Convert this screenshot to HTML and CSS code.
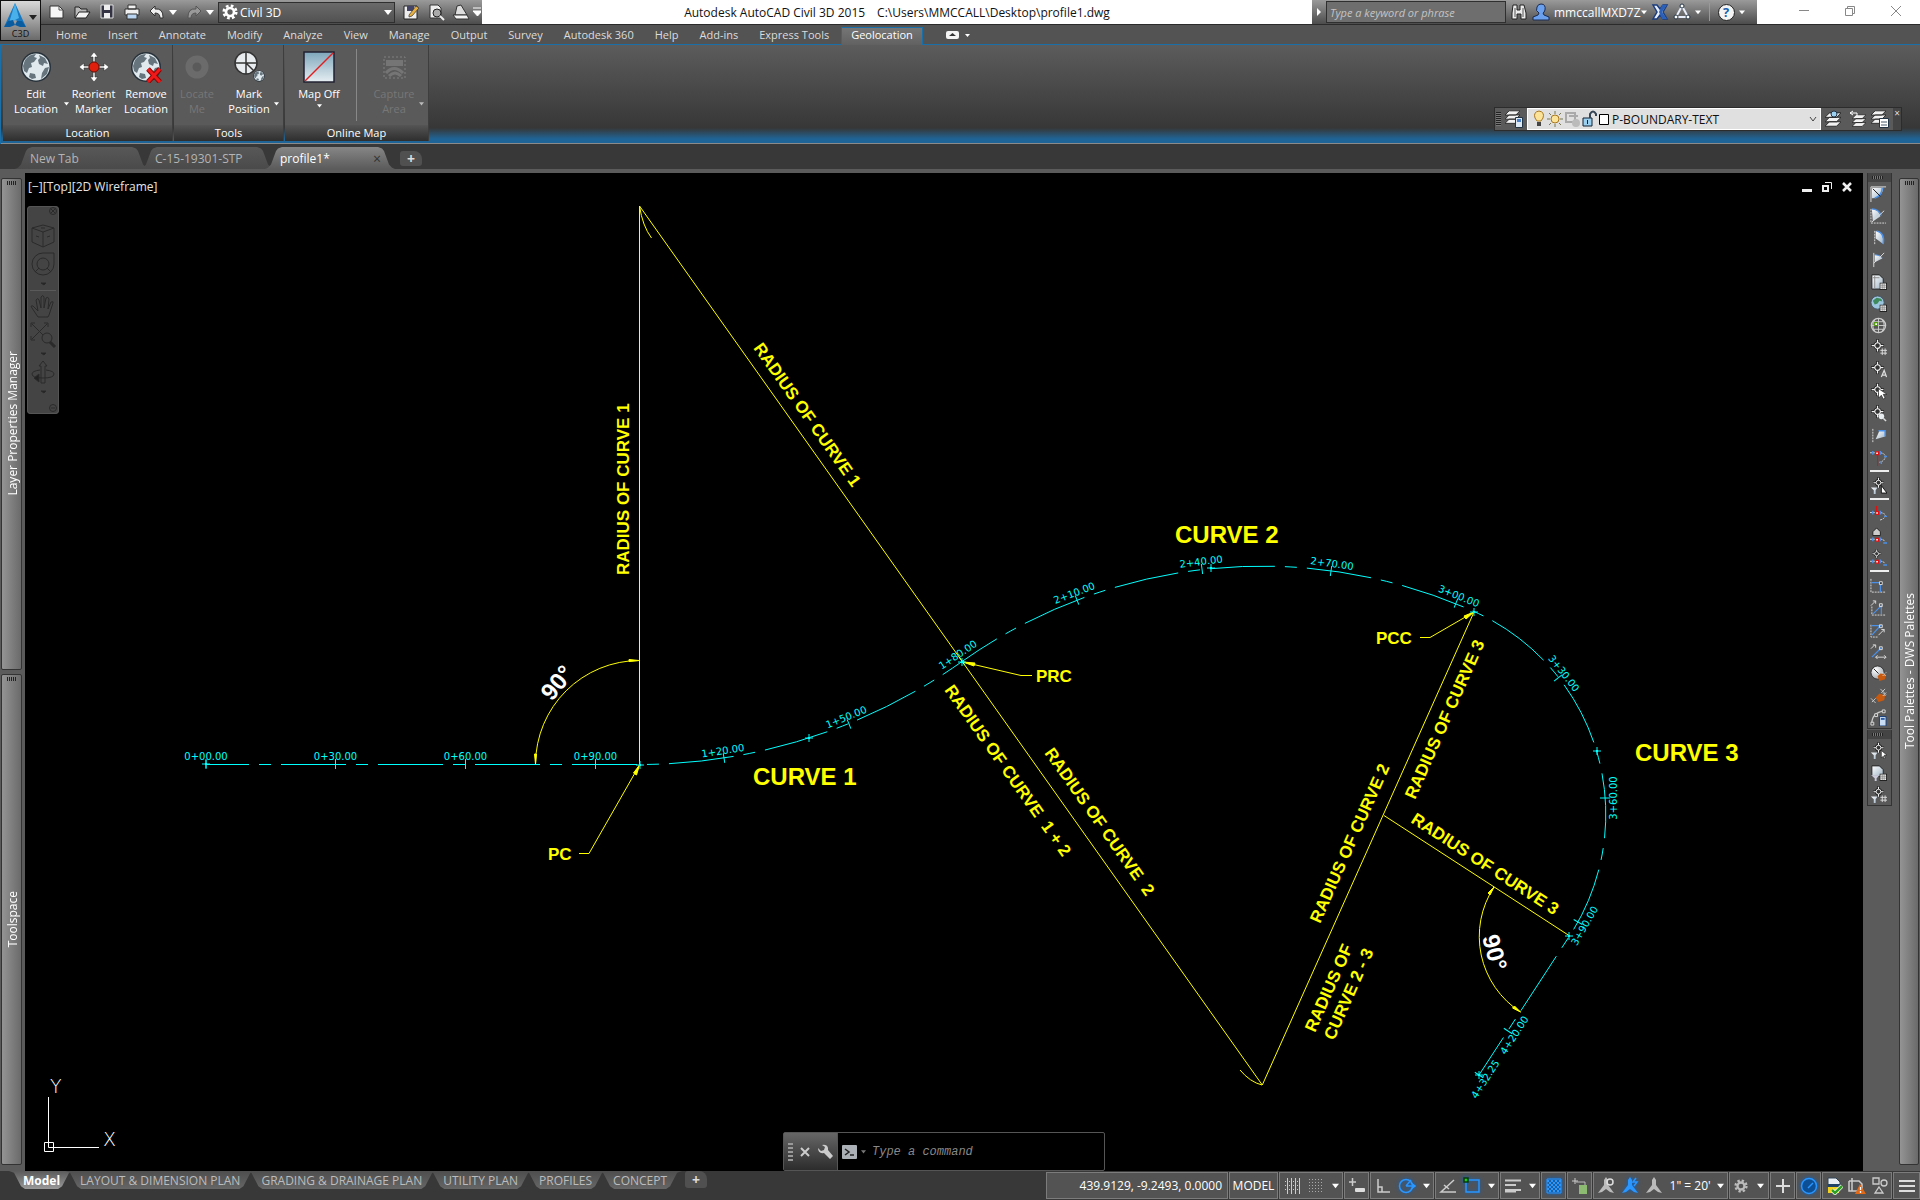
FILE: index.html
```html
<!DOCTYPE html>
<html lang="en">
<head>
<meta charset="utf-8">
<title>Autodesk AutoCAD Civil 3D 2015</title>
<link rel="stylesheet" href="styles.css">
</head>
<body>
<svg class="sprite" aria-hidden="true">
  <defs>
    <linearGradient id="ice" x1="0" y1="0" x2="1" y2="1"><stop offset="0" stop-color="#fff"/><stop offset="1" stop-color="#9fb4c6"/></linearGradient>
    <linearGradient id="sky" x1="0" y1="0" x2="0" y2="1"><stop offset="0" stop-color="#7ea6bb"/><stop offset="1" stop-color="#e6eef2"/></linearGradient>
    <radialGradient id="ball" cx=".35" cy=".3" r=".8"><stop offset="0" stop-color="#fff"/><stop offset="1" stop-color="#9aa2a8"/></radialGradient>
  </defs>
  <symbol id="caret" viewBox="0 0 8 8"><path d="M0 2h8L4 7z" fill="currentColor"/></symbol>
  <symbol id="globe" viewBox="0 0 32 32"><circle cx="16" cy="16" r="15" fill="#26313a"/><circle cx="16" cy="16" r="13.5" fill="#dfe9ee"/><path d="M5 9q4-6 11-6l-2 3 3 1-3 4-3 1 1 4-3 1-2 5-3-2-1-5zM19 4l6 3 3 6-4-1-1 3-4-2-1-4 2-2zM25 17l4-1-2 7-6 5 1-6zM10 22l5 1 1 4-4 1-3-2z" fill="#66747e"/></symbol>
  <symbol id="target" viewBox="0 0 18 18"><path d="M9 0v6M9 12v6M0 9h6M12 9h6" stroke="#222" stroke-width="3.5"/><circle cx="9" cy="9" r="4" fill="none" stroke="#222" stroke-width="3.5"/><path d="M9 1v5M9 12v5M1 9h5M12 9h5" stroke="#f2f2f2" stroke-width="1.6"/><circle cx="9" cy="9" r="3.8" fill="#333" stroke="#f2f2f2" stroke-width="1.5"/></symbol>
  <symbol id="t1" viewBox="0 0 18 18"><path d="M2 3h12a12 11 0 0 1-12 11z" fill="url(#ice)"/><path d="M13 3q0 8-8 11" stroke="#4a90e8" stroke-width="1.6" fill="none"/><path d="M1 18V2h16" stroke="#ddd" fill="none"/><path d="M3 4l8 8" stroke="#111"/></symbol>
  <symbol id="t2" viewBox="0 0 18 18"><path d="M2 2q8 1 9 8L3 15z" fill="url(#ice)"/><path d="M2 2q7 0 10 7" stroke="#4a90e8" fill="none" stroke-width="1.5"/><path d="M2 16L15 4" stroke="#ddd"/><path d="M1 2v15h16" stroke="#ddd" stroke-dasharray="2 1" fill="none"/></symbol>
  <symbol id="t3" viewBox="0 0 18 18"><path d="M6 2q9 1 8 14L6 10z" fill="url(#ice)"/><path d="M7 2q9 2 7 14" stroke="#4a90e8" fill="none" stroke-width="1.5"/><path d="M5 2v14" stroke="#ddd" stroke-dasharray="2 1"/></symbol>
  <symbol id="t4" viewBox="0 0 18 18"><path d="M5 4q6 0 8 4l-8 4z" fill="url(#ice)"/><path d="M5 4q5 0 8 3" stroke="#4a90e8" fill="none"/><path d="M4 2v15M4 13l11-11" stroke="#ddd"/></symbol>
  <symbol id="mini" viewBox="0 0 8 8"><path d="M0 0h8v8H0z" fill="#222"/><path d="M1 1h6v6H1z" fill="#f2f2f2"/><path d="M3 1v6M5 1v6M1 3h6M1 5h6" stroke="#666" stroke-width=".6"/></symbol>
  <symbol id="t5" viewBox="0 0 18 18"><path d="M2 2h8l4 4v11H2z" fill="url(#ice)" stroke="#222"/><path d="M5 3v13M3 5h7" stroke="#888"/><use href="#mini" x="10" y="10" width="8" height="8"/></symbol>
  <symbol id="t6" viewBox="0 0 18 18"><circle cx="8" cy="8" r="7" fill="#9cc6e0" stroke="#456" /><path d="M3 6l4-3 5 1 1 3-3-1-2 3-3 1z" fill="#3f8a5c"/><use href="#mini" x="10" y="10" width="8" height="8"/></symbol>
  <symbol id="t7" viewBox="0 0 18 18"><circle cx="9" cy="9" r="7.5" fill="#555" stroke="#ccc" stroke-width="1.4"/><path d="M9 1v16M1 9h16M3 5h12M3 13h12M5 3q-4 6 0 12M13 3q4 6 0 12" stroke="#ccc" fill="none"/><path d="M5 6h3v3H5z" fill="#fff" stroke="#4da000" stroke-width="1.2"/></symbol>
  <symbol id="t8" viewBox="0 0 18 18"><use href="#target" width="14" height="14" x="1"/><path d="M13 10v7M16 10v7M11 12h7M11 15h7" stroke="#ddd"/></symbol>
  <symbol id="t9" viewBox="0 0 18 18"><use href="#target" width="14" height="14" x="1"/><path d="M12 17l3-7 2.500 7M13 15h4" stroke="#ddd" fill="none" stroke-width="1.300"/></symbol>
  <symbol id="t10" viewBox="0 0 18 18"><use href="#target" width="14" height="14" x="1"/><path d="M9 6v10l3-3 2 4 2-1-2-4h4z" fill="#fff" stroke="#222" stroke-width=".7"/></symbol>
  <symbol id="t11" viewBox="0 0 18 18"><use href="#target" width="14" height="14" x="1"/><circle cx="12" cy="12" r="3" fill="#e8eef0"/><path d="M14 14l3 3" stroke="#ddd" stroke-width="1.500"/></symbol>
  <symbol id="t12" viewBox="0 0 18 18"><path d="M6 13L10 4h6v6z" fill="url(#ice)"/><path d="M9 4h7v6" stroke="#4a90e8" fill="none" stroke-width="1.500"/><path d="M3 2v14" stroke="#ddd" stroke-dasharray="2 1"/></symbol>
  <symbol id="t13" viewBox="0 0 18 18"><path d="M0 4h6M11 4q6 1 5 5t-6 5" stroke="#ddd" stroke-dasharray="2 1" fill="none"/><path d="M3 2v4M11 2v4M15 8h3M12 13v3" stroke="#4a90e8" stroke-width="1.500"/><path d="M8 5v13" stroke="#e01010" stroke-width="1.200"/><path d="M6 3h3v3H6z" fill="#fff" stroke="#e01010" stroke-width="1.300"/></symbol>
  <symbol id="t14" viewBox="0 0 18 18"><use href="#target" width="12" height="12" x="3"/><path d="M1 11h7l-2 3v4H4v-4z" fill="url(#ice)"/><path d="M12 9v8h6z" fill="#fff" stroke="#111"/></symbol>
  <symbol id="t15" viewBox="0 0 18 18"><path d="M0 8h5M11 8q6 1 5 4t-6 4" stroke="#ddd" stroke-dasharray="2 1" fill="none"/><path d="M3 6v4M11 6v4M15 12h3" stroke="#4a90e8" stroke-width="1.500"/><path d="M7 1v6" stroke="#e01010" stroke-width="1.500"/><path d="M6 7h3v3H6z" fill="#fff" stroke="#e01010" stroke-width="1.300"/></symbol>
  <symbol id="t16" viewBox="0 0 18 18"><path d="M3 9V5l4-4 4 4v4z" fill="#ccc" stroke="#222"/><path d="M0 13h5M11 13q4 0 5 3" stroke="#ddd" stroke-dasharray="2 1" fill="none"/><path d="M3 11v4M11 11v4M14 17h4" stroke="#4a90e8" stroke-width="1.500"/><path d="M6 12h3v3H6z" fill="#fff" stroke="#e01010" stroke-width="1.300"/></symbol>
  <symbol id="t17" viewBox="0 0 18 18"><use href="#target" width="10" height="10" x="2"/><path d="M0 13h5M11 13q4 0 5 3" stroke="#ddd" stroke-dasharray="2 1" fill="none"/><path d="M3 11v4M11 11v4M14 17h4" stroke="#4a90e8" stroke-width="1.500"/><path d="M6 12h3v3H6z" fill="#fff" stroke="#e01010" stroke-width="1.300"/></symbol>
  <symbol id="t18" viewBox="0 0 18 18"><path d="M1 2v14h16" stroke="#ddd" stroke-dasharray="2 1" fill="none"/><path d="M1 6h10v10" stroke="#4a90e8" fill="none" stroke-width="1.300"/><path d="M10 5h3v3h-3z" fill="#333" stroke="#ddd"/></symbol>
  <symbol id="t19" viewBox="0 0 18 18"><path d="M2 8v9h15" stroke="#ddd" stroke-dasharray="2 1" fill="none"/><path d="M3 16L12 7v9" stroke="#4a90e8" fill="none" stroke-width="1.300"/><path d="M10 5h3v3h-3zM1 7l5-5M3 2h3v3" fill="none" stroke="#ddd"/></symbol>
  <symbol id="t20" viewBox="0 0 18 18"><path d="M1 4v13h8" stroke="#ddd" stroke-dasharray="2 1" fill="none"/><path d="M1 5h10L2 15" stroke="#4a90e8" fill="none" stroke-width="1.300"/><path d="M10 4h3v3h-3zM9 15l6-6M12 9h3v3" fill="none" stroke="#ddd"/></symbol>
  <symbol id="t21" viewBox="0 0 18 18"><path d="M2 15L12 5" stroke="#4a90e8" stroke-width="1.300"/><path d="M10 4h3v3h-3zM1 6l4-4M3 2h3v3M6 15h11M8 13l-2 2 2 2M15 13l2 2-2 2" fill="none" stroke="#ddd"/></symbol>
  <symbol id="t22" viewBox="0 0 18 18"><circle cx="8" cy="8" r="7" fill="url(#ball)" stroke="#333"/><path d="M4 4l5 5" stroke="#222"/><path d="M8 12l3-3 6 1-1 5-6 2z" fill="#c85a10"/><path d="M13 8l4 4M17 8l-4 4" stroke="#fff" stroke-dasharray="1 1"/></symbol>
  <symbol id="t23" viewBox="0 0 18 18"><path d="M1 12l5 5M2 16l4-4M11 2l6 6M16 2l-4 4" stroke="#ccc" fill="none"/><path d="M6 11l4-4 6 2-1 5-6 2z" fill="#c85a10"/><path d="M13 6l4 4M17 6l-4 4" stroke="#fff" stroke-dasharray="1 1"/></symbol>
  <symbol id="t24" viewBox="0 0 18 18"><path d="M2 15Q2 4 15 2" stroke="#ccc" fill="none" stroke-width="1.300"/><path d="M1 14h3v3H1zM5 5h3v3H5zM13 1h3v3h-3z" fill="#555" stroke="#ddd"/><path d="M10 8h7v10h-7z" fill="#c8dcf4" stroke="#123a78"/><path d="M11.500 9.500h4v2h-4z" fill="#2d5da8"/></symbol>
  <symbol id="t25" viewBox="0 0 18 18"><use href="#target" width="12" height="12" x="3"/><path d="M1 11h7l-2 3v4H4v-4z" fill="url(#ice)"/><path d="M12 9v8l2-2 1 3 1-1-1-3h3z" fill="#fff" stroke="#111" stroke-width=".6"/></symbol>
  <symbol id="t26" viewBox="0 0 18 18"><path d="M2 2h8l4 4v7H2z" fill="url(#ice)" stroke="#222"/><path d="M1 12h9l-3 3v3H5v-3z" fill="#ccd"/><use href="#mini" x="10" y="10" width="8" height="8"/></symbol>
  <symbol id="t27" viewBox="0 0 18 18"><use href="#target" width="12" height="12" x="3"/><path d="M1 11h7l-2 3v4H4v-4z" fill="url(#ice)"/><path d="M13 10v7M16 10v7M11 12h7M11 15h7" stroke="#ddd"/></symbol>
  <symbol id="layers" viewBox="0 0 18 18"><path d="M5 11h13l-5 5H0zM5 6h13l-5 5H0zM5 1h13l-5 5H0z" fill="#f2f2f2" stroke="#222"/></symbol>
  <symbol id="node" viewBox="-5 -5 10 10"><path d="M-4 0h8M0-4V4M-1 0l1-1 1 1-1 1z" stroke="#0ff" fill="#0ff"/></symbol>
  <symbol id="person" viewBox="0 0 18 18"><path d="M9 1q5 0 4 6-1 3-2 3l1 2 5 2v3H1v-3l5-2 1-2Q3 8 5 4q1-3 4-3z" fill="#6aa0ee" stroke="#1a2a50"/></symbol>
  <symbol id="gear" viewBox="0 0 18 18"><circle cx="9" cy="9" r="4.500" fill="none" stroke="currentColor" stroke-width="3"/><circle cx="9" cy="9" r="7" fill="none" stroke="currentColor" stroke-width="3" stroke-dasharray="3 2.500"/></symbol>
  <symbol id="compass" viewBox="0 0 18 18"><path d="M9 0l2 3v5l6 8-4-1-4-3-4 3-4 1 6-8V3z" fill="currentColor"/></symbol>
</svg>

<header class="app-head">
  <div class="titlebar">
    <div class="quick">
      <button class="app-menu" aria-label="Application menu"><svg width="36" height="27" viewBox="0 0 36 27"><path d="M12 1l11 24-6-5-5-2-5 2-6 5z" fill="#1878c0"/><path d="M12 1l4 15-4 2-6 3z" fill="#4ab0ea"/><path d="M1 25l4-6 5-1 2 5-5 2zM23 25l-4-6-5 0-2 4 5 2z" fill="#0a5ca0"/><path d="M26 13h8l-4 5z" fill="#222"/></svg><span>C3D</span></button>
      <button aria-label="New"><svg width="18" height="18"><path d="M2 3h9l4 4v8H2z" fill="#f6f6f6" stroke="#333"/><path d="M11 3v4h4" fill="none" stroke="#555"/></svg></button>
      <button aria-label="Open"><svg width="18" height="18"><path d="M2 15V4h4l2 2h6v3" fill="#bbb" stroke="#222"/><path d="M2 15l4-6h11l-4 6z" fill="#f4f4f4" stroke="#222"/></svg></button>
      <button aria-label="Save"><svg width="18" height="18"><path d="M3 2h12v13H3z" fill="#334" stroke="#ddd"/><path d="M6 2h6v5H6zM6 10h6v5H6z" fill="#eee"/></svg></button>
      <button aria-label="Plot"><svg width="18" height="18"><path d="M5 2h8v4H5zM2 6h14v6H2z" fill="#f0f0f0" stroke="#333"/><path d="M4 11h10v5H4z" fill="#b8d4f0" stroke="#333"/></svg></button>
      <button aria-label="Undo"><svg width="18" height="18"><path d="M2 8l5-5v3q8-1 8 8v1h-3q0-5-5-5v3z" fill="#f0f0f0" stroke="#333"/></svg></button>
      <svg class="car" width="8" height="8"><use href="#caret"/></svg>
      <button aria-label="Redo"><svg width="18" height="18"><path d="M16 8l-5-5v3Q3 5 3 14v1h3q0-5 5-5v3z" fill="#999" stroke="#555"/></svg></button>
      <svg class="car" width="8" height="8"><use href="#caret"/></svg>
      <label class="workspace"><svg width="16" height="16"><use href="#gear"/></svg><select aria-label="Workspace"><option>Civil 3D</option></select><svg class="ws-car" width="8" height="8"><use href="#caret"/></svg></label>
      <button aria-label="Save as"><svg width="18" height="18"><path d="M2 3h13v13H2z" fill="#eee" stroke="#222"/><path d="M5 3h7v5H5z" fill="#446"/><path d="M7 12l7-9 3 2-7 8-3 1z" fill="#e8b040" stroke="#333" stroke-width=".7"/></svg></button>
      <button aria-label="Preview"><svg width="18" height="18"><path d="M3 2h8l3 3v10H3z" fill="#eee" stroke="#333"/><circle cx="10" cy="10" r="4" fill="#aaa" stroke="#222"/><path d="M13 13l4 4" stroke="#eee" stroke-width="2"/></svg></button>
      <button aria-label="Publish"><svg width="18" height="18"><path d="M5 3l4-1 6 10H3z" fill="#ddd" stroke="#333"/><path d="M1 12h14l2 4H4z" fill="#f4f4f4" stroke="#333"/></svg></button>
      <svg class="car" width="9" height="10"><path d="M0 1h9M0 4h9l-4.500 5z" fill="#fff" stroke="#fff" stroke-width="1"/></svg>
    </div>
    <h1 class="title"><span>Autodesk AutoCAD Civil 3D 2015</span><span>C:\Users\MMCCALL\Desktop\profile1.dwg</span></h1>
    <div class="info">
      <svg class="expander" width="6" height="8"><path d="M1 0v8l4-4z" fill="#fff"/></svg>
      <input type="text" placeholder="Type a keyword or phrase" aria-label="Search">
      <button aria-label="Find"><svg width="18" height="18"><path d="M3 2h4v5h3V2h4l2 8v6h-5v-5H7v5H2v-6z" fill="#ececec" stroke="#222"/><path d="M5 5v9M13 5v9" stroke="#555"/></svg></button>
      <button aria-label="Account"><svg width="18" height="18"><use href="#person"/></svg></button>
      <button class="user">mmccallMXD7Z<svg width="6" height="6"><use href="#caret"/></svg></button>
      <button aria-label="Exchange"><svg width="18" height="18"><path d="M2 2h4l3 4 3-4h4l-4 7 4 7h-4l-3-4-3 4H2l4-7z" fill="#e8eefa" stroke="#1b3d80" stroke-width="1.500"/><path d="M11 2h5l-5 7 5 7h-5l-3-7z" fill="#2a60b8"/></svg></button>
      <button aria-label="Autodesk 360"><svg width="18" height="18"><path d="M9 3l6 11H3z" fill="none" stroke="#e8eefa" stroke-width="2"/><circle cx="9" cy="3" r="2" fill="#fff" stroke="#234"/><circle cx="3" cy="14" r="2" fill="#fff" stroke="#234"/><circle cx="15" cy="14" r="2" fill="#fff" stroke="#234"/></svg></button>
      <svg class="car" width="6" height="6"><use href="#caret"/></svg>
      <i class="vsep"></i>
      <button class="help" aria-label="Help">?</button>
      <svg class="car" width="6" height="6"><use href="#caret"/></svg>
    </div>
    <div class="winctl">
      <button aria-label="Minimize"><svg width="12" height="12"><path d="M1 5.500h10" stroke="#888"/></svg></button>
      <button aria-label="Restore"><svg width="12" height="12" fill="none" stroke="#888"><path d="M1.500 3.500h7v7h-7zM3.500 3V1.500h7v7H9"/></svg></button>
      <button aria-label="Close"><svg width="12" height="12" stroke="#888"><path d="M1 1l10 10M11 1L1 11"/></svg></button>
    </div>
  </div>

  <nav class="menu">
    <a href="#">Home</a><a href="#">Insert</a><a href="#">Annotate</a><a href="#">Modify</a><a href="#">Analyze</a><a href="#">View</a><a href="#">Manage</a><a href="#">Output</a><a href="#">Survey</a><a href="#">Autodesk 360</a><a href="#">Help</a><a href="#">Add-ins</a><a href="#">Express Tools</a><a href="#" class="on">Geolocation</a>
    <button aria-label="Minimize ribbon"><svg width="26" height="10"><rect x="1" y="1" width="13" height="8" rx="2" fill="#f4f4f4"/><path d="M4 6h7L7.500 3z" fill="#333"/><path d="M20 4h5l-2.500 3z" fill="#fff"/></svg></button>
  </nav>

  <div class="ribbon">
    <section class="panel p-loc">
      <div class="tools">
        <button class="tool w56"><svg width="32" height="32"><use href="#globe"/></svg><span>Edit<br>Location</span><svg class="drop" width="5" height="5"><use href="#caret"/></svg></button>
        <button class="tool w56"><svg width="32" height="32"><path d="M16 1l4 5h-3v5h-2V6h-3zM16 31l4-5h-3v-5h-2v5h-3zM1 16l5-4v3h5v2H6v3zM31 16l-5-4v3h-5v2h5v3z" fill="#fff" stroke="#333" stroke-width=".6"/><circle cx="16" cy="16" r="5" fill="#e0200c" stroke="#701008"/></svg><span>Reorient<br>Marker</span></button>
        <button class="tool w46"><svg width="32" height="32"><use href="#globe"/><path d="M18 18l12 13M30 18L18 31" stroke="#8a0808" stroke-width="5"/><path d="M18 18l12 13M30 18L18 31" stroke="#f01818" stroke-width="3"/></svg><span>Remove<br>Location</span></button>
      </div>
      <h2>Location</h2>
    </section>
    <section class="panel p-tools">
      <div class="tools">
        <button class="tool w46" disabled><svg width="32" height="32"><circle cx="16" cy="16" r="8" fill="none" stroke="#777" stroke-width="7"/></svg><span>Locate<br>Me</span></button>
        <button class="tool w50"><svg width="32" height="32"><circle cx="13" cy="12" r="11" fill="#e8ecee" stroke="#333" stroke-width="1.500"/><path d="M13 1v22M2 12h22M13 12l8 8" stroke="#333" stroke-width="1.500"/><svg x="20" y="19" width="12" height="12"><use href="#globe"/></svg></svg><span>Mark<br>Position</span><svg class="drop" width="5" height="5"><use href="#caret"/></svg></button>
      </div>
      <h2>Tools</h2>
    </section>
    <section class="panel p-map">
      <div class="tools">
        <button class="tool w68"><svg width="32" height="32"><path d="M1 1h30v30H1z" fill="url(#sky)" stroke="#223" stroke-width="1.500"/><path d="M2 30L30 2" stroke="#e02020" stroke-width="1.500"/></svg><span>Map Off</span><svg class="drop low" width="5" height="5"><use href="#caret"/></svg></button>
        <i class="tool-sep"></i>
        <button class="tool w68" disabled><svg width="32" height="32"><path d="M6 6h21v21H6z" fill="none" stroke="#999" stroke-dasharray="2 2"/><path d="M8 9h17v6H8z" fill="#888"/><path d="M8 22q8-9 17 0M11 25q6-6 12 0" stroke="#888" stroke-width="3" fill="none"/></svg><span>Capture<br>Area</span><svg class="drop" width="5" height="5"><use href="#caret"/></svg></button>
      </div>
      <h2>Online Map</h2>
    </section>
    <div class="layerbar">
      <i class="grip-v"></i>
      <button aria-label="Layer properties"><svg width="18" height="18"><svg width="15" height="15"><use href="#layers"/></svg><path d="M10.500 7.500h7v10h-7z" fill="#dce8f4" stroke="#234"/><path d="M12 9h4v3h-4z" fill="#4a80c8"/></svg></button>
      <label class="layersel">
        <svg width="80" height="18"><path d="M9 1q6 1 4 7l-2 3H7L5 8Q3 2 9 1z" fill="#fbe39a" stroke="#a87820"/><path d="M7 12h4v4H7z" fill="#444"/><circle cx="25" cy="9" r="4" fill="#fbe39a" stroke="#a87820"/><path d="M25 1v3M25 14v3M17 9h3M30 9h3M19 3l2 2M31 3l-2 2M19 15l2-2M31 15l-2-2" stroke="#775"/><path d="M36 3h9v9h-9zM39 6h9" fill="none" stroke="#aaa" stroke-width="2"/><circle cx="46" cy="13" r="4" fill="#bbb"/><path d="M53 8h9v8h-9z" fill="#9cd0f0" stroke="#123"/><path d="M60 8V4q3-5 6 0v2" fill="none" stroke="#345" stroke-width="2"/><path d="M57.500 10v4" stroke="#123"/><path d="M69.500 4.500h9v10h-9z" fill="#fff" stroke="#000"/></svg>
        <select aria-label="Layer"><option>P-BOUNDARY-TEXT</option></select>
        <svg class="ly-car" width="8" height="8"><path d="M1 2l3 4 3-4" fill="none" stroke="#444"/></svg>
      </label>
      <button aria-label="Make current"><svg width="18" height="18"><svg y="2" width="16" height="16"><use href="#layers"/></svg><circle cx="9" cy="4" r="3" fill="#9cd0f0" stroke="#234"/></svg></button>
      <button aria-label="Layer previous"><svg width="18" height="18"><svg x="4" y="4" width="14" height="14"><use href="#layers"/></svg><path d="M2 3h7v3M5 1L2 3l3 2" fill="none" stroke="#fff"/></svg></button>
      <button aria-label="Layer states"><svg width="18" height="18"><svg width="15" height="15"><use href="#layers"/></svg><path d="M8.500 8.500h9v9h-9z" fill="#fff" stroke="#234"/><path d="M10 12h6M10 15h6" stroke="#456"/></svg></button>
      <button class="tiny" aria-label="Close toolbar">×</button>
    </div>
  </div>

  <div class="filetabs">
    <button>New Tab</button><button>C-15-19301-STP</button><button class="on">profile1*<span>×</span></button><button class="plus" aria-label="New drawing">+</button>
  </div>
</header>

<main class="work">
  <aside class="dock-left">
    <button class="pal pal-a"><i class="grip-h"></i><span>Layer Properties Manager</span></button>
    <button class="pal pal-b"><i class="grip-h"></i><span>Toolspace</span></button>
  </aside>

  <div class="canvas">
    <svg class="drawing" viewBox="25 173 1838 998" preserveAspectRatio="xMidYMid meet" role="img" aria-label="Horizontal alignment with three curves">
      <path class="align" d="M206 764.500H639.500A558.500 558.500 0 0 0 962 661.500A519 519 0 0 1 1474 611.500A222 222 0 0 1 1569.500 936L1479 1075"/>
      <g class="sta">
        <g transform="translate(206 764)"><path d="M0-5V5"/><text y="-4">0+00.00</text></g>
        <g transform="translate(335.500 764)"><path d="M0-5V5"/><text y="-4">0+30.00</text></g>
        <g transform="translate(465.500 764)"><path d="M0-5V5"/><text y="-4">0+60.00</text></g>
        <g transform="translate(595.500 764)"><path d="M0-5V5"/><text y="-4">0+90.00</text></g>
        <g transform="translate(724 758) rotate(-9)"><path d="M0-5V5"/><text y="-4">1+20.00</text></g>
        <g transform="translate(849 724) rotate(-22)"><path d="M0-5V5"/><text y="-4">1+50.00</text></g>
        <g transform="translate(962 661) rotate(-34)"><path d="M0-5V5"/><text y="-4">1+80.00</text></g>
        <g transform="translate(1077 600) rotate(-21)"><path d="M0-5V5"/><text y="-4">2+10.00</text></g>
        <g transform="translate(1202 569) rotate(-7)"><path d="M0-5V5"/><text y="-4">2+40.00</text></g>
        <g transform="translate(1331 571) rotate(8)"><path d="M0-5V5"/><text y="-4">2+70.00</text></g>
        <g transform="translate(1456 603) rotate(22)"><path d="M0-5V5"/><text y="-4">3+00.00</text></g>
        <g transform="translate(1558 678) rotate(52)"><path d="M0-5V5"/><text y="-4">3+30.00</text></g>
        <g transform="translate(1605 798) rotate(-90)"><path d="M0-5V5"/><text y="12">3+60.00</text></g>
        <g transform="translate(1578 922) rotate(-60)"><path d="M0-5V5"/><text y="11">3+90.00</text></g>
        <g transform="translate(1508 1031) rotate(-57)"><path d="M0-5V5"/><text y="11">4+20.00</text></g>
        <g transform="translate(1479 1075) rotate(-57)"><path d="M0-5V5"/><text y="11">4+32.25</text></g>
      </g>
      <g class="dim">
        <path d="M639.500 765V206L1262.300 1085L1474 612M1384 815.500L1569 935.500"/>
        <path d="M639.500 206q3 20 12 32M1240 1070q10 12 22 15"/>
        <path d="M535.500 764A104 104 0 0 1 639.500 660.500M1494 887A90 90 0 0 0 1520.500 1012"/>
        <path d="M639.500 765L589 853.500H579M963 662L1021 675.500H1032M1474 612L1430 637.500H1420"/>
        <path class="fill" d="M535.500 764l-1-10h2zM639 660.500l-10-1v2zM1494 887l-6 6 2 2zM1520.500 1012l-8-4 2-2zM639.500 765l-6 8 3 2zM963 662l12 1-1 3zM1474 612l-10 4 2 3z"/>
      </g>
      <g class="nodes">
        <use href="#node" x="201" y="759" width="10" height="10"/><use href="#node" x="635" y="760" width="10" height="10"/><use href="#node" x="804" y="733" width="10" height="10"/><use href="#node" x="957" y="657" width="10" height="10"/><use href="#node" x="1206" y="563" width="10" height="10"/><use href="#node" x="1469" y="607" width="10" height="10"/><use href="#node" x="1592" y="746" width="10" height="10"/><use href="#node" x="1564" y="931" width="10" height="10"/><use href="#node" x="1474" y="1070" width="10" height="10"/>
      </g>
      <g class="note">
        <text transform="translate(629 575) rotate(-90)">RADIUS OF CURVE 1</text>
        <text transform="translate(753 348) rotate(54.700)">RADIUS OF CURVE 1</text>
        <text transform="translate(944 690) rotate(54.700)">RADIUS OF CURVE  1 + 2</text>
        <text transform="translate(1044 753) rotate(54.700)">RADIUS OF CURVE  2</text>
        <text transform="translate(1320 924) rotate(-66)">RADIUS OF CURVE 2</text>
        <text transform="translate(1415 800) rotate(-66)">RADIUS OF CURVE 3</text>
        <text transform="translate(1410 822) rotate(33)">RADIUS OF CURVE 3</text>
        <text transform="translate(1315 1033) rotate(-66)">RADIUS OF</text>
        <text transform="translate(1334 1041) rotate(-66)">CURVE 2 - 3</text>
        <text x="548" y="860">PC</text><text x="1036" y="682">PRC</text><text x="1376" y="644">PCC</text>
        <g class="big"><text x="753" y="785">CURVE 1</text><text x="1175" y="543">CURVE 2</text><text x="1635" y="761">CURVE 3</text></g>
        <g class="deg"><text transform="translate(552 702) rotate(-51)">90°</text><text transform="translate(1482 937) rotate(75)">90°</text></g>
      </g>
      <g class="ucs"><path d="M48.500 1097V1147.500H99M44.500 1142.500h9v9h-9z"/><text x="50" y="1093">Y</text><text x="103" y="1146">X</text></g>
    </svg>

    <div class="vp-label">[−][Top][2D Wireframe]</div>
    <div class="vp-ctl">
      <button aria-label="Minimize viewport"><svg width="12" height="12"><path d="M1 8h10v3H1z" fill="#eee"/></svg></button>
      <button aria-label="Restore viewport"><svg width="12" height="12" fill="none" stroke="#eee"><path d="M2 5h5v5H2z" stroke-width="2"/><path d="M4 1.500h6.500V8"/></svg></button>
      <button aria-label="Close viewport"><svg width="12" height="12"><path d="M2 2l8 8M10 2l-8 8" stroke="#eee" stroke-width="2.500"/></svg></button>
    </div>

    <div class="navbar">
      <svg width="32" height="208" viewBox="0 0 32 208" fill="none" stroke="#2a2a2a">
        <circle cx="26" cy="5" r="3.500"/><path d="M24 3l4 4M28 3l-4 4"/>
        <path d="M5 22l11-3 11 3v14l-11 5-11-5zM5 22l11 4 11-4M16 26v15"/><path d="M9 30l3 1M20 31l3-1M14 22h4"/>
        <path d="M16 47h11v11a11 11 0 1 1-11-11z"/><circle cx="16" cy="58" r="6"/><path d="M12 62l-4 4M20 62l4 4"/>
        <path d="M14 77h5l-2 2zM14 147h5l-2 2zM14 185h5l-2 2z" fill="#222"/><path d="M3 84.500h26" stroke="#5a5a5a"/>
        <path d="M11 111l-6-9q-2-3 1-2l5 5-2-11q2-3 3 0l2 8V91q2-3 3 0v11l2-10q2-2 3 1l-1 10 3-7q3-1 2 1l-4 12-1 2z"/>
        <path d="M5 118l15 15M20 118L5 133M4 121v-4h4M17 117h4v4M4 130v4h4"/><circle cx="20" cy="132" r="5" fill="#444"/><path d="M23 136l5 5" stroke-width="3"/>
        <path d="M16 155l4 5h-2v17h-4v-17h-2z"/><path d="M13 164q-8 1-8 4 0 4 11 4t11-4q0-3-8-4"/><path d="M12 168v8l-5-4z" fill="#222"/>
        <circle cx="26" cy="202" r="3.500"/><path d="M24 202h4"/>
      </svg>
    </div>

    <div class="command">
      <div class="cmd-grip"><i class="dots"></i><button aria-label="Close"><svg width="12" height="12"><path d="M2 2l8 8M10 2l-8 8" stroke="#ccc" stroke-width="2"/></svg></button><button aria-label="Customize"><svg width="16" height="16"><path d="M1 4l3 3 3-1 1-3-3-2q5-1 6 3v2l5 6-3 3-6-6Q1 10 1 4z" fill="#ccc"/></svg></button></div>
      <svg width="15" height="14"><rect width="15" height="14" rx="1" fill="#aab0b6"/><path d="M3 4l4 3-4 3M8 10h4" fill="none" stroke="#222" stroke-width="1.500"/></svg>
      <svg class="cmd-car" width="5" height="5"><use href="#caret"/></svg>
      <input type="text" placeholder="Type a command" aria-label="Command line">
    </div>
  </div>

  <aside class="dock-tools">
    <div class="toolbox">
      <i class="grip-h"></i>
      <button aria-label="Angle distance"><svg><use href="#t1"/></svg></button><button aria-label="Azimuth distance"><svg><use href="#t2"/></svg></button><button aria-label="Deflection"><svg><use href="#t3"/></svg></button><button aria-label="Bearing"><svg><use href="#t4"/></svg></button><button aria-label="Northing easting"><svg><use href="#t5"/></svg></button><button aria-label="Grid northing"><svg><use href="#t6"/></svg></button><button aria-label="Latitude longitude"><svg><use href="#t7"/></svg></button><button aria-label="Point number"><svg><use href="#t8"/></svg></button><button aria-label="Point name"><svg><use href="#t9"/></svg></button><button aria-label="Point object"><svg><use href="#t10"/></svg></button><button aria-label="Zoom point"><svg><use href="#t11"/></svg></button><button aria-label="Side shot"><svg><use href="#t12"/></svg></button><button aria-label="Station offset"><svg><use href="#t13"/></svg></button>
      <hr>
      <button aria-label="Filter point"><svg><use href="#t14"/></svg></button>
      <hr>
      <button aria-label="Profile station"><svg><use href="#t15"/></svg></button><button aria-label="Profile surface"><svg><use href="#t16"/></svg></button><button aria-label="Profile point"><svg><use href="#t17"/></svg></button>
      <hr>
      <button aria-label="Inquiry 1"><svg><use href="#t18"/></svg></button><button aria-label="Inquiry 2"><svg><use href="#t19"/></svg></button><button aria-label="Inquiry 3"><svg><use href="#t20"/></svg></button><button aria-label="Inquiry 4"><svg><use href="#t21"/></svg></button><button aria-label="Clear circle"><svg><use href="#t22"/></svg></button><button aria-label="Clear line"><svg><use href="#t23"/></svg></button><button aria-label="Curve calculator"><svg><use href="#t24"/></svg></button>
    </div>
    <div class="toolbox">
      <i class="grip-h"></i>
      <button aria-label="Select point"><svg><use href="#t25"/></svg></button><button aria-label="Filter sheet"><svg><use href="#t26"/></svg></button><button aria-label="Filter number"><svg><use href="#t27"/></svg></button>
    </div>
  </aside>
  <aside class="dock-right"><button class="pal pal-c"><i class="grip-h"></i><span>Tool Palettes - DWS Palettes</span></button></aside>
</main>

<footer class="foot">
  <div class="layouts">
    <button class="on">Model</button><button>LAYOUT &amp; DIMENSION PLAN</button><button>GRADING &amp; DRAINAGE PLAN</button><button>UTILITY PLAN</button><button>PROFILES</button><button>CONCEPT</button><button class="plus" aria-label="New layout">+</button>
  </div>
  <div class="status">
    <div class="cell coords">439.9129, -9.2493, 0.0000</div>
    <div class="cell"><button class="model">MODEL</button></div>
    <div class="cell w64">
      <button aria-label="Grid"><svg width="18" height="18" stroke="#ccc"><path d="M4.500 1v16M8.500 1v16M12.500 1v16M16.500 1v16"/><path d="M2 4.500h16M2 8.500h16M2 12.500h16" stroke-dasharray="1 1"/></svg></button>
      <button aria-label="Snap"><svg width="18" height="18" stroke="#aaa" stroke-dasharray="1 2"><path d="M2 2.500h15M2 5.500h15M2 8.500h15M2 11.500h15M2 14.500h15"/></svg></button>
      <svg class="car" width="7" height="7"><use href="#caret"/></svg>
    </div>
    <div class="cell w24"><button aria-label="Dynamic input"><svg width="18" height="18"><path d="M1 5h7M4.500 1v8" stroke="#ccc" stroke-width="1.500"/><rect x="7" y="11" width="10" height="4" rx="1" fill="#ddd"/></svg></button></div>
    <div class="cell w64">
      <button aria-label="Ortho"><svg width="18" height="18" fill="none" stroke="#ccc" stroke-width="1.500"><path d="M4 2v13h12M4 10h4v5"/></svg></button>
      <button class="lit" aria-label="Polar"><svg width="18" height="18" fill="none" stroke="#2a96ff" stroke-width="1.500"><circle cx="8" cy="9" r="6.500"/><path d="M8 9h9M8 9l5-6M13 6l4 3-4 3"/></svg></button>
      <svg class="car" width="7" height="7"><use href="#caret"/></svg>
    </div>
    <div class="cell w64">
      <button aria-label="Object tracking"><svg width="18" height="18" fill="none" stroke="#ccc" stroke-width="1.500"><path d="M17 15H2L15 3M5 8l5 4"/></svg></button>
      <button class="lit" aria-label="Object snap"><svg width="18" height="18" fill="none" stroke="#2a96ff" stroke-width="1.500"><path d="M3 3h13v12H3z"/><path d="M1 1h4v4H1z" stroke="#0a3a0a" fill="#1ad01a"/></svg></button>
      <svg class="car" width="7" height="7"><use href="#caret"/></svg>
    </div>
    <div class="cell w40">
      <button aria-label="Lineweight"><svg width="18" height="18" stroke="#ccc"><path d="M1 3.500h16M1 8h11M1 13h16" stroke-width="2"/><path d="M1 14h11" stroke-width="3"/></svg></button>
      <svg class="car" width="7" height="7"><use href="#caret"/></svg>
    </div>
    <div class="cell w24"><button class="lit" aria-label="Transparency"><svg width="18" height="18" stroke="#2a96ff" fill="none"><path d="M2 2h14v14H2z" fill="#1d5f9e"/><path d="M2 4h14M2 8h14M2 12h14" stroke-width="2" stroke-dasharray="2 2"/><path d="M4 6h12M4 10h12M4 14h12" stroke-width="2" stroke-dasharray="2 2"/></svg></button></div>
    <div class="cell w24"><button aria-label="Selection cycling"><svg width="18" height="18"><path d="M1 4h6M4 1v6" stroke="#ccc"/><path d="M5 5h9v4" stroke="#bbb" fill="none"/><path d="M8 8h8v9H8z" fill="#8dbb72"/></svg></button></div>
    <div class="cell scale">
      <button aria-label="Annotation visibility"><svg width="18" height="18" color="#bbb"><use href="#compass"/><circle cx="13" cy="5" r="3" fill="none" stroke="#ddd" stroke-width="1.500"/></svg></button>
      <button class="lit" aria-label="Auto scale"><svg width="18" height="18" color="#2a96ff"><use href="#compass"/><path d="M15 1l-3 4h4l-3 4" fill="none" stroke="#2a96ff" stroke-width="1.500"/></svg></button>
      <button aria-label="Annotation scale"><svg width="18" height="18" color="#bbb"><use href="#compass"/></svg></button>
      <button class="ratio">1" = 20'</button>
      <svg class="car" width="7" height="7"><use href="#caret"/></svg>
    </div>
    <div class="cell w40"><button aria-label="Workspace switching"><svg width="14" height="14" color="#bbb"><use href="#gear"/></svg></button><svg class="car" width="7" height="7"><use href="#caret"/></svg></div>
    <div class="cell w24"><button aria-label="Annotation monitor"><svg width="18" height="18"><path d="M2 9h14M9 2v14" stroke="#ddd" stroke-width="2"/></svg></button></div>
    <div class="cell w24"><button class="lit" aria-label="Hardware acceleration"><svg width="18" height="18"><circle cx="9" cy="9" r="7.500" fill="#0c4f94" stroke="#2a96ff" stroke-width="1.500"/><path d="M8 11l5-5" stroke="#2a96ff" stroke-width="1.500"/></svg></button></div>
    <div class="cell w72">
      <button aria-label="Trusted DWG"><svg width="18" height="18"><path d="M3 1h8l4 4v5H3z" fill="#e8eef4" stroke="#345"/><path d="M3 7h12v3H3z" fill="#246"/><path d="M3 10h11v6H3z" fill="#f0d020"/><path d="M7 13l3 3 7-7" stroke="#fff" stroke-width="4" fill="none"/><path d="M7 13l3 3 7-7" stroke="#30a020" stroke-width="2.500" fill="none"/></svg></button>
      <button aria-label="Map check"><svg width="18" height="18"><path d="M1 4h10l3 3v7H4V1M1 4v10h8" fill="none" stroke="#ccc" stroke-width="1.500"/><path d="M12 7l6 10H7z" fill="#e06a18"/><path d="M12.500 10v3M12.500 14v2" stroke="#fff" stroke-width="1.300"/></svg></button>
      <button aria-label="Isolate objects"><svg width="18" height="18" fill="none" stroke="#ccc" stroke-width="1.300"><path d="M2 1h6v6H2zM8 10l4 6H4z"/><circle cx="13" cy="6" r="3"/></svg></button>
    </div>
    <div class="cell w28"><button aria-label="Customization"><svg width="18" height="18"><path d="M1 4h16M1 9h16M1 14h16" stroke="#ddd" stroke-width="2"/></svg></button></div>
  </div>
</footer>
</body>
</html>
```
FILE: styles.css
```css
* { box-sizing: border-box; }
body { margin: 0; min-height: 100vh; display: flex; flex-direction: column; overflow: hidden; background: #383838; color: #e6e6e6; font: 11px/15px "Open Sans", "Noto Sans", sans-serif; }
button, input, select { font: inherit; color: inherit; border: 0; padding: 0; margin: 0; background: none; }
button { display: inline-flex; align-items: center; justify-content: center; white-space: nowrap; }
svg { display: block; flex: none; }
.sprite { position: absolute; width: 0; height: 0; }
.car { color: #fff; }

/* title bar */
.titlebar { position: relative; display: flex; height: 24px; background: #fff; }
.quick { display: flex; align-items: center; gap: 7px; width: 482px; padding-left: 48px; background: linear-gradient(#9a9a9a, #4c4c4c); }
.quick button:not(.app-menu) { width: 18px; height: 22px; }
.quick .car { width: 8px; margin: 0 1px 0 -4px; }
.app-menu { position: absolute; z-index: 2; left: 0; top: 0; width: 41px; height: 41px; flex-direction: column; border: 1px solid #111; background: linear-gradient(#d8d8d8, #6a6a6a); color: #111; font-size: 9px; line-height: 10px; }
.workspace { position: relative; display: flex; align-items: center; width: 180px; height: 21px; margin-left: -4px; padding-left: 3px; gap: 2px; background: linear-gradient(#6a6a6a, #525252); border: 1px solid #2f2f2f; color: #fff; }
select { appearance: none; outline: 0; }
.workspace select { flex: 1; font-size: 12px; }
.ws-car { margin-right: 2px; }
.title { flex: 1; display: flex; justify-content: center; align-items: center; gap: 12px; margin: 0; font-size: 12px; font-weight: 400; color: #111; }
.info { display: flex; align-items: center; gap: 4px; width: 445px; background: linear-gradient(#9a9a9a, #4c4c4c); color: #fff; }
.info .expander { margin: 0 0 0 4px; }
.info input { width: 180px; height: 22px; padding: 0 3px; background: #6e6e6e; border: 1px solid #2f2f2f; font-size: 11px; font-style: italic; }
.info input::placeholder { color: #c4c4c4; opacity: 1; }
.info button { height: 20px; min-width: 18px; }
.user { font-size: 12px; }
.vsep { width: 1px; height: 18px; margin: 0 4px; background: #999; }
.info .help { width: 17px; height: 17px; min-width: 17px; border-radius: 9px; background: #f4f4f4; border: 1px solid #222; color: #1c5fae; font-weight: 700; font-size: 13px; }
.winctl { display: flex; width: 163px; padding-left: 24px; }
.winctl button { width: 46px; height: 22px; }

/* ribbon tabs */
.menu { display: flex; height: 21px; padding-left: 45px; background: #535353; border-top: 1px solid #2b2b2b; border-bottom: 1px solid #1b6fa8; }
.menu a { padding: 1px 10px 0 11px; line-height: 17px; color: #dcdcdc; text-decoration: none; }
.menu a.on { position: relative; height: 19px; margin: 2px 0 0 2px; padding: 0 9px; line-height: 14px; background: linear-gradient(#757575, #606060); border: 1px solid #1b6fa8; border-bottom: 0; color: #fff; }
.menu button { margin-left: 22px; }

.ribbon { position: relative; display: flex; height: 99px; padding: 0 0 3px 2px; background: linear-gradient(#5c5c5c 0, #373737 83px, #1f6496 94px, #1f6496 98px, #8a8a8a 98px); border-left: 1px solid #1b6fa8; }
.panel { display: flex; flex-direction: column; margin-right: 1px; background: #5a5a5a; border-right: 1px solid #3e3e3e; }
.p-loc { width: 170px; } .p-tools { width: 110px; } .p-map { width: 144px; }
.panel h2 { margin: 0; height: 16px; font-size: 11px; line-height: 15px; font-weight: 400; text-align: center; color: #fff; background: linear-gradient(#555, #2e2e2e); }
.tools { flex: 1; display: flex; padding: 6px 3px 0 5px; justify-content: space-between; }
.p-tools .tools { padding: 6px 9px 0 0; } .p-map .tools { padding: 6px 0 0; }
.tool { position: relative; flex-direction: column; justify-content: flex-start; color: #fff; gap: 3px; text-align: center; height: 68px; }
.tool:disabled { color: #777; }
.tool:disabled > svg:first-child { opacity: .6; }
.tool:disabled .drop { color: #bbb; }
.w46 { width: 46px; } .w50 { width: 50px; } .w56 { width: 56px; } .w68 { width: 68px; }
.drop { position: absolute; right: -5px; top: 50px; }
.drop.low { right: 31px; top: 52px; }
.tool-sep { width: 1px; height: 72px; margin-top: -2px; background: #888; }
.w68 .drop:not(.low) { right: 4px; }

.layerbar { position: absolute; right: 18px; top: 62px; width: 408px; height: 24px; display: flex; align-items: center; gap: 3px; background: #5a5a5a; border: 1px solid #2c2c2c; }
.layerbar > button { width: 20px; height: 22px; }
.layerbar > .tiny { width: 8px; align-items: flex-start; font-size: 10px; line-height: 10px; color: #ddd; background: #444; }
.grip-v { width: 5px; height: 14px; margin-left: 1px; background: repeating-linear-gradient(#222 0 1px, #777 1px 2px); }
.layersel { flex: 1; display: flex; align-items: center; height: 22px; gap: 2px; padding: 0 3px 0 2px; background: #e0e0e0; border: 1px solid #fff; color: #111; }
.layersel select { flex: 1; font-size: 12px; }

/* file tabs */
.filetabs { display: flex; height: 29px; padding: 3px 0 0 15px; background: #383838; border-bottom: 4px solid #5b5b5b; }
.filetabs button, .layouts button { clip-path: polygon(0 100%, 3px 94%, 6px 80%, 11px 18%, 13px 7%, 17px 0, calc(100% - 17px) 0, calc(100% - 13px) 7%, calc(100% - 11px) 18%, calc(100% - 6px) 80%, calc(100% - 3px) 94%, 100% 100%); }
.filetabs button { width: 134px; margin-right: -9px; padding-left: 15px; justify-content: flex-start; background: linear-gradient(#585858, #4a4a4a); color: #b4b4b4; font-size: 12px; }
.filetabs button.on { width: 130px; padding: 0 14px 0 15px; justify-content: space-between; background: linear-gradient(#868686, #5b5b5b); color: #fff; }
.filetabs button.on span { font-size: 14px; color: #333; }
.filetabs button.plus, .layouts button.plus { width: 22px; margin: 4px 0 3px 14px; padding: 0; justify-content: center; clip-path: none; border-radius: 3px 8px 3px 3px; color: #ddd; font-weight: 700; font-size: 14px; line-height: 12px; background: #505050; }

/* work area */
.work { flex: 1; display: flex; min-height: 0; background: #5b5b5b; }
.dock-left { width: 25px; display: flex; flex-direction: column; gap: 4px; padding: 5px 3px 6px 1px; }
.pal { position: relative; flex-direction: column; border: 1px solid #333; border-radius: 2px; background: linear-gradient(90deg, #949494, #6a6a6a); color: #fff; font-size: 12px; }
.pal span { writing-mode: vertical-rl; transform: rotate(180deg); margin-left: 1px; }
.pal .grip-h { position: absolute; top: 2px; left: 5px; width: 10px; }
.pal-a, .pal-b { flex: 1; }
.grip-h { display: block; height: 4px; background: repeating-linear-gradient(90deg, #222 0 1px, transparent 1px 2px); }
.canvas { position: relative; flex: 1; background: #000; overflow: hidden; }
.drawing { width: 100%; height: 100%; }
.align { fill: none; stroke: #0ff; stroke-width: 1; stroke-dasharray: 65 10 12 10; stroke-dashoffset: 22; }
.sta path { stroke: #0ff; }
.sta text { font: 400 10px "DejaVu Sans", sans-serif; fill: #0ff; text-anchor: middle; }
.dim path { fill: none; stroke: #ff0; stroke-width: 1; }
.dim .fill { fill: #ff0; }
.note text { font: 700 17px "Liberation Sans", sans-serif; fill: #ff0; white-space: pre; }
.note .big text { font-size: 24px; }
.note .deg text { font-size: 24px; fill: #fff; }
.ucs path { fill: none; stroke: #fff; }
.ucs text { font: 200 19px "DejaVu Sans Light", "DejaVu Sans", sans-serif; fill: #fff; }
.vp-label { position: absolute; left: 3px; top: 6px; font-size: 12px; }
.vp-ctl { position: absolute; right: 10px; top: 8px; display: flex; gap: 8px; }
.navbar { position: absolute; left: 2px; top: 33px; border-radius: 4px; background: #444; box-shadow: inset 0 0 0 1px #555; }

.command { position: absolute; left: 50%; bottom: 0; width: 322px; height: 39px; margin-left: -161px; display: flex; align-items: center; gap: 4px; border: 1px solid #555; border-radius: 2px; background: #000; }
.cmd-grip { display: flex; align-items: center; gap: 6px; width: 54px; height: 100%; padding-left: 4px; background: linear-gradient(#666, #2c2c2c); border-right: 1px solid #555; color: #ccc; }
.dots { width: 5px; height: 18px; background: repeating-linear-gradient(#999 0 2px, transparent 2px 4px); }
.cmd-car { color: #777; }
.command input { flex: 1; min-width: 0; margin-left: 2px; outline: 0; font: italic 12px "Liberation Mono", monospace; color: #ccc; }
.command input::placeholder { color: #888; opacity: 1; }

.dock-tools { width: 33px; padding-left: 4px; }
.toolbox { width: 25px; margin-bottom: 1px; background: #595959; border: 1px solid #333; border-top: 0; }
.toolbox .grip-h { height: 9px; border: 2px solid #444; border-width: 3px 8px 3px 4px; background-color: #777; }
.toolbox button { display: flex; width: 21px; height: 22px; }
.toolbox svg { width: 17px; height: 17px; }
.toolbox hr { height: 2px; margin: 2px; border: 0; background: #eee; }
.dock-right { display: flex; width: 24px; padding: 5px 1px 6px 3px; }
.dock-right .pal { flex: 1; }

/* footer */
.foot { display: flex; height: 29px; background: #383838; }
.layouts { flex: 1; display: flex; height: 18px; padding-left: 9px; }
.layouts button { clip-path: polygon(0 0, 5px 10%, 12px 85%, 16px 100%, calc(100% - 16px) 100%, calc(100% - 12px) 85%, calc(100% - 5px) 10%, 100% 0); padding: 0 15px; margin-right: -9px; background: linear-gradient(#4e4e4e, #666); color: #bcbcbc; font-size: 12px; }
.layouts button.on { padding: 0 14px; background: linear-gradient(#5b5b5b, #999); color: #fff; font-weight: 700; }
.layouts button.plus { height: 17px; margin: 0 0 0 12px; }
.status { display: flex; gap: 1px; height: 27px; margin-top: 1px; }
.cell { display: flex; align-items: center; justify-content: space-around; background: #535353; border: 1px solid #7c7c7c; color: #fff; font-size: 12px; }
.coords { width: 182px; justify-content: flex-end; padding-right: 5px; }
.model { width: 47px; }
.w24 { width: 25px; } .w28 { width: 27px; } .w40 { width: 40px; } .w64 { width: 64px; } .w72 { width: 70px; }
.scale { width: 135px; }
.lit { filter: drop-shadow(0 0 2px #0a62c4); }
```
